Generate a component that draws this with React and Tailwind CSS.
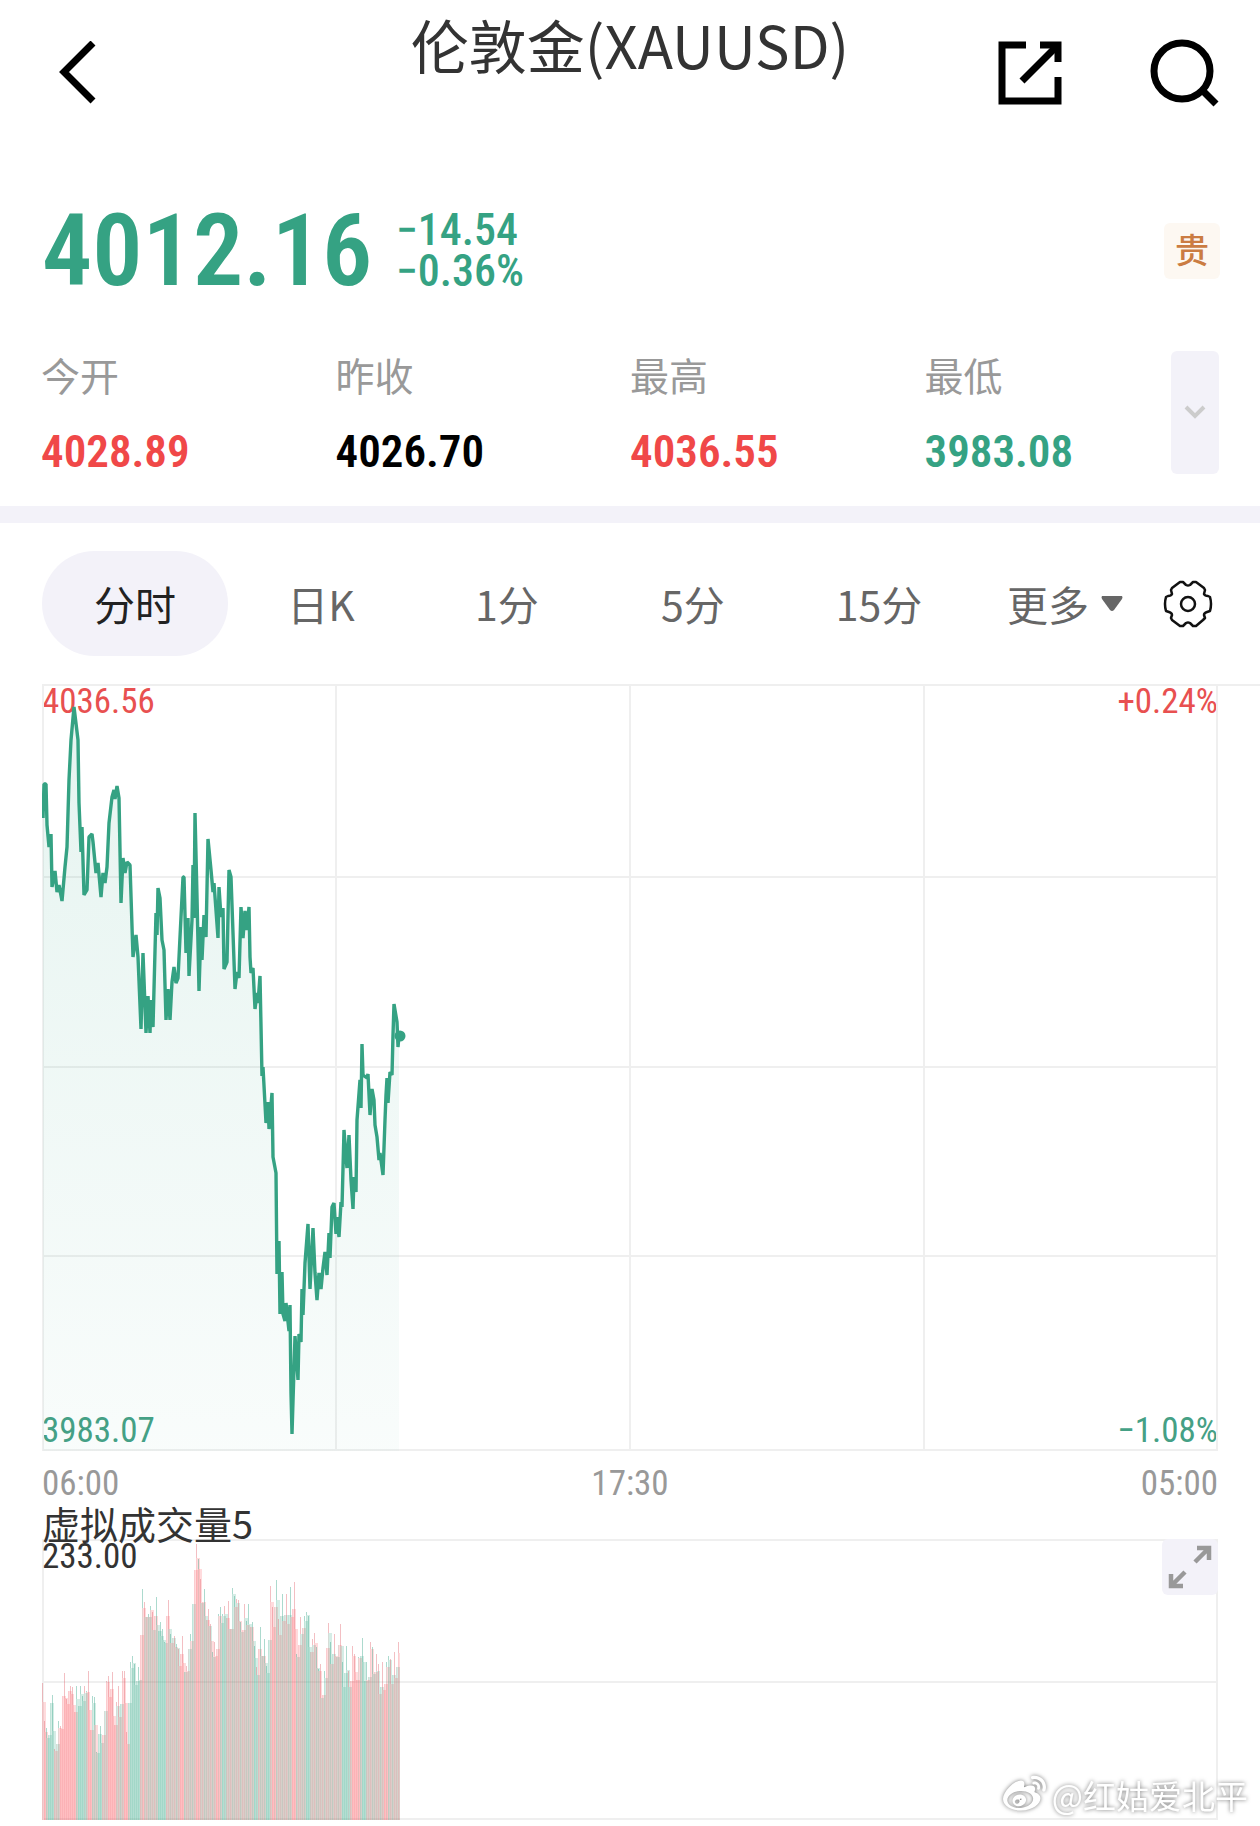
import React, { useState } from 'react';
import { FaWeibo } from 'react-icons/fa';

const stats = [
  { label: '今开', value: '4028.89', color: 'text-[#f04848]' },
  { label: '昨收', value: '4026.70', color: 'text-black' },
  { label: '最高', value: '4036.55', color: 'text-[#f04848]' },
  { label: '最低', value: '3983.08', color: 'text-[#35a283]' },
];

const periods = ['分时', '日K', '1分', '5分', '15分'];

// price line, x: 0-1176, y: 0-767
const pricePoints =
  '1,134 2,100 4,100 5,141 7,163 9,150 10,203 13,187 15,208 17,201 20,217 23,183 25,163 27,96 29,56 32,23 36,56 37,119 39,168 40,143 42,211 45,206 47,153 50,150 51,158 54,189 56,179 59,213 61,189 63,199 65,183 67,139 70,113 72,106 73,115 75,102 77,114 79,219 81,174 83,189 85,178 88,181 91,273 94,251 96,273 99,345 101,269 104,349 106,312 108,349 109,316 111,343 114,229 115,251 116,204 118,214 120,256 122,266 124,336 126,305 128,336 130,298 132,283 134,299 136,294 138,253 141,193 142,193 144,269 146,234 147,292 150,236 151,181 152,234 153,129 155,213 157,307 159,243 160,276 162,231 164,253 166,155 169,186 171,208 172,199 176,254 177,203 179,233 181,224 182,285 185,278 187,186 189,193 193,305 195,288 197,294 199,223 201,254 203,227 205,246 207,223 208,273 209,289 211,284 213,325 215,309 216,319 218,292 220,392 221,383 224,439 226,418 227,445 230,409 231,473 234,489 235,590 237,557 238,630 240,588 241,630 243,637 244,619 247,647 248,621 249,709 250,750 253,652 256,696 257,650 259,658 260,605 261,631 263,579 266,540 268,605 271,544 273,589 275,616 277,589 279,605 281,584 283,568 285,591 287,549 288,574 290,523 292,519 294,550 295,533 297,553 299,518 300,523 302,446 304,473 305,484 307,451 309,496 311,525 312,493 314,508 315,436 318,396 319,424 320,360 321,391 325,394 326,390 328,431 330,405 332,416 333,441 335,453 337,476 338,469 341,491 343,436 344,411 345,394 346,419 348,388 350,391 351,351 352,320 355,338 356,363 357,352';

// top of each volume bar, one every 2 units
const volumeTops = [
  144, 182, 189, 207, 168, 156, 210, 207, 182, 187, 170, 134, 160, 157, 147, 148, 182, 147, 168, 147, 157, 147, 152, 132, 200,
  157, 158, 213, 200, 187, 204, 183, 142, 137, 158, 133, 198, 163, 147, 197, 132, 132, 193, 200, 123, 117, 125, 147, 128, 132,
  50, 63, 80, 75, 67, 73, 92, 58, 95, 83, 90, 103, 83, 61, 95, 100, 97, 105, 110, 128, 97, 133, 127, 117, 95,
  87, 32, 5, 20, 40, 73, 50, 88, 70, 85, 113, 103, 123, 75, 68, 75, 67, 82, 62, 115, 49, 57, 60, 61, 83,
  95, 65, 82, 65, 92, 83, 107, 128, 127, 88, 127, 100, 127, 133, 47, 68, 83, 41, 80, 97, 55, 93, 55, 97, 48,
  88, 43, 115, 110, 78, 100, 77, 73, 77, 122, 100, 94, 108, 130, 125, 170, 132, 122, 84, 103, 132, 95, 123, 109, 85,
  123, 152, 107, 132, 153, 107, 115, 150, 118, 118, 99, 142, 123, 152, 103, 108, 140, 115, 125, 173, 123, 165, 123, 117, 120,
  152, 113, 145, 103,
];

// r = up, g = down, m = mixed
const volumeRuns = [
  ['r', 2], ['g', 3], ['m', 4], ['r', 8], ['g', 4], ['m', 2], ['r', 2], ['m', 2], ['g', 2], ['m', 3], ['r', 5], ['m', 3], ['r', 3],
  ['g', 6], ['r', 1], ['m', 8], ['g', 4], ['m', 6], ['r', 3], ['m', 5], ['r', 2], ['m', 9], ['r', 1], ['m', 1], ['g', 2], ['m', 3],
  ['r', 1], ['m', 10], ['g', 2], ['m', 4], ['g', 2], ['m', 1], ['r', 2], ['m', 2], ['r', 1], ['m', 6], ['r', 2], ['m', 4], ['g', 3],
  ['m', 16], ['g', 3], ['m', 2], ['r', 3], ['m', 2], ['g', 2], ['m', 8], ['r', 2], ['m', 3], ['g', 1], ['r', 1],
];

const volumeKinds = volumeRuns.flatMap(([kind, count]) => Array(count).fill(kind));

const volumeBars = volumeTops.map((top, i) => {
  const next = volumeTops[i + 1] ?? top;
  const kind = volumeKinds[i] || 'm';
  const up = kind === 'm' ? i % 2 === 0 : kind === 'r';
  const spikeUp = kind === 'm' ? (i * 5) % 7 < 4 : up;
  return {
    x: i * 2,
    top,
    bodyTop: Math.round((top + next) / 2) + ((i * 7) % 13),
    fill: up ? '#ff4d55' : '#2fa384',
    spikeFill: spikeUp ? '#e0606a' : '#2fa384',
  };
});

const numberFont = 'font-["Roboto_Condensed","Noto_Sans_CJK_SC",sans-serif]';

const BackIcon = () => (
  <svg width="40" height="64" viewBox="0 0 40 64" fill="none" stroke="#000" strokeWidth="7">
    <path d="M35 2 L6 31 L35 60" />
  </svg>
);

const ShareIcon = () => (
  <svg width="64" height="64" viewBox="0 0 64 64" fill="none" stroke="#000" strokeWidth="7">
    <path d="M28 4 H4 V60 H60 V36" />
    <path d="M42 4 H60 V21" />
    <path d="M60 4 L24 40" />
  </svg>
);

const SearchIcon = () => (
  <svg width="70" height="70" viewBox="0 0 70 70" fill="none" stroke="#000" strokeWidth="7">
    <circle cx="32" cy="33" r="28" />
    <path d="M52 52 L66 66" />
  </svg>
);

const GearIcon = () => (
  <svg width="50" height="48" viewBox="0 0 50 48" fill="none" stroke="#111" strokeWidth="2.5" strokeLinejoin="round">
    <path d="M17 2 L20 2 L23 5 Q25 6 27 5 L30 2 L33 2 L41 8 L42 10 L41 14 Q42 16 45 16 L47 17 Q49 24 47 31 L44 32 Q41 33 41 35 L42 38 L40 40 L33 46 L30 46 L27 43 Q25 42 23 43 L20 46 L17 46 L9 40 L8 38 L9 35 Q9 33 6 32 L3 31 Q1 24 3 17 L5 16 Q8 16 9 14 L8 10 L9 8 Z" />
    <circle cx="25" cy="24" r="7" />
  </svg>
);

const ExpandIcon = () => (
  <svg width="56" height="56" viewBox="0 0 56 56" fill="none" stroke="#999" strokeWidth="4.5">
    <path d="M35 9 H47 V21 M47 9 L33 23" />
    <path d="M9 35 V47 H21 M9 47 L23 33" />
  </svg>
);

const PriceChart = () => (
  <svg viewBox="0 2 1176 765" className="relative block w-full">
    <defs>
      <linearGradient id="priceFill" x1="0" y1="0" x2="0" y2="1">
        <stop offset="0" stopColor="#2fa384" stopOpacity="0.12" />
        <stop offset="1" stopColor="#2fa384" stopOpacity="0.03" />
      </linearGradient>
    </defs>
    <g stroke="#efefef" strokeWidth="2">
      {[193, 383, 572, 766].map((y) => (
        <line key={y} x1="0" x2="1176" y1={y} y2={y} />
      ))}
      {[1, 294, 588, 882, 1175].map((x) => (
        <line key={x} x1={x} x2={x} y1="0" y2="767" />
      ))}
    </g>
    <polygon points={`1,767 ${pricePoints} 357,767`} fill="url(#priceFill)" />
    <polyline points={pricePoints} fill="none" stroke="#35a283" strokeWidth="3.4" strokeLinejoin="bevel" />
    <circle cx="358" cy="352" r="5.5" fill="#35a283" />
  </svg>
);

const VolumeChart = () => (
  <svg viewBox="0 0 1176 281" className="block w-full">
    <g stroke="#efefef" strokeWidth="2">
      {[1, 143, 280].map((y) => (
        <line key={y} x1="0" x2="1176" y1={y} y2={y} />
      ))}
      <line x1="1" x2="1" y1="0" y2="281" />
      <line x1="1175" x2="1175" y1="0" y2="281" />
    </g>
    {volumeBars.map((bar) => (
      <g key={bar.x}>
        <rect x={bar.x} y={bar.bodyTop} width={Math.min(4, 358 - bar.x)} height={281 - bar.bodyTop} fill={bar.fill} fillOpacity="0.2" />
        <rect x={bar.x} y={bar.top} width="1" height={Math.max(0, bar.bodyTop - bar.top)} fill={bar.spikeFill} fillOpacity="0.4" />
        <rect x={bar.x} y={bar.bodyTop} width="1" height={281 - bar.bodyTop} fill={bar.spikeFill} fillOpacity="0.12" />
      </g>
    ))}
  </svg>
);

const App = () => {
  const [period, setPeriod] = useState('分时');

  return (
    <main className='relative min-h-screen bg-white pb-[6px] font-["Noto_Sans_CJK_SC",sans-serif] text-[#333]'>
      {/* Header */}
      <header className="grid h-[146px] grid-cols-[1fr_auto_1fr] items-center px-10">
        <button type="button" aria-label="返回" className="ml-[18px] justify-self-start">
          <BackIcon />
        </button>
        <h1 className="mt-[15px] self-start text-[58px] leading-[58px]">伦敦金(XAUUSD)</h1>
        <div className="flex items-center justify-end gap-[88px]">
          <button type="button" aria-label="分享">
            <ShareIcon />
          </button>
          <button type="button" aria-label="搜索">
            <SearchIcon />
          </button>
        </div>
      </header>

      {/* Latest price */}
      <section className={`${numberFont} mt-[51px] flex h-[108px] items-center pr-10 pl-[42px] text-[#35a283]`}>
        <p className="text-[100px] leading-[108px] font-semibold">4012.16</p>
        <div className="ml-6 text-[44px] leading-[41px] font-medium">
          <p>−14.54</p>
          <p>−0.36%</p>
        </div>
        <span className="ml-auto flex h-14 w-14 items-center justify-center rounded-md bg-[#fdf8f2] text-[34px] font-medium text-[#cb7c42]">
          贵
        </span>
      </section>

      {/* Stats */}
      <section className="mt-[46px] grid grid-cols-4 pr-[41px] pb-[34px] pl-[41px]">
        {stats.map((item, i) => (
          <div key={item.label} className="flex justify-between">
            <dl>
              <dt className="text-[39px] leading-[46px] text-[#999]">{item.label}</dt>
              <dd className={`${numberFont} ${item.color} mt-[33px] text-[45px] leading-[44px] font-semibold`}>{item.value}</dd>
            </dl>
            {i === stats.length - 1 && (
              <button type="button" aria-label="展开" className="flex w-12 items-center justify-center rounded-md bg-[#f3f2f9]">
                <svg width="22" height="16" viewBox="0 0 22 16" fill="none" stroke="#ccc" strokeWidth="4">
                  <path d="M2 2 L11 11 L20 2" />
                </svg>
              </button>
            )}
          </div>
        ))}
      </section>

      <div className="-mt-0.5 h-[17px] bg-[#f3f2f9]"></div>

      {/* Period tabs */}
      <nav className="flex items-center px-[42px] py-7 text-[41px] text-[#666]">
        {periods.map((name) => (
          <button
            key={name}
            type="button"
            onClick={() => setPeriod(name)}
            className={`h-[105px] flex-1 rounded-full ${name === period ? 'bg-[#f3f2f9] text-[#222]' : ''}`}
          >
            {name}
          </button>
        ))}
        <button type="button" className="flex h-[105px] flex-1 items-center justify-center gap-3">
          更多
          <svg width="22" height="16" viewBox="0 0 22 16" fill="#666">
            <path d="M1 0 H21 Q22 1 21 3 L13 14 Q11 16 9 14 L1 3 Q0 1 1 0" />
          </svg>
        </button>
        <button type="button" aria-label="设置" className="flex w-[60px] justify-center">
          <GearIcon />
        </button>
      </nav>

      {/* Price chart */}
      <section className={`${numberFont} ml-[42px] border-t-2 border-[#efefef] pr-[42px]`}>
        <div className="relative text-[35px] leading-8">
          <span className="absolute top-0 left-0 text-[#e85050]">4036.56</span>
          <span className="absolute top-0 right-0 text-[#e85050]">+0.24%</span>
          <span className="absolute bottom-1 left-0 text-[#45a085]">3983.07</span>
          <span className="absolute right-0 bottom-1 text-[#45a085]">−1.08%</span>
          <PriceChart />
        </div>
        <div className="flex justify-between pt-[15px] text-[35px] leading-9 text-[#999]">
          <span>06:00</span>
          <span>17:30</span>
          <span>05:00</span>
        </div>
      </section>

      {/* Volume */}
      <section className="px-[42px] pt-[2px]">
        <h2 className="relative z-10 text-[38px] leading-[38px]">虚拟成交量5</h2>
        <div className="relative -mt-[3px]">
          <span className={`${numberFont} absolute top-0.5 left-0 text-[35px] leading-8`}>233.00</span>
          <VolumeChart />
          <button type="button" aria-label="全屏" className="absolute top-0 right-0 rounded-md bg-[#f3f2f9]">
            <ExpandIcon />
          </button>
        </div>
      </section>

      <div className="absolute right-3 bottom-2.5 flex items-center gap-1.5 text-[33px] leading-[38px] text-white drop-shadow-[0_0_2px_#777]">
        <FaWeibo size={43} />
        <span>@红姑爱北平</span>
      </div>
    </main>
  );
};

export default App;
